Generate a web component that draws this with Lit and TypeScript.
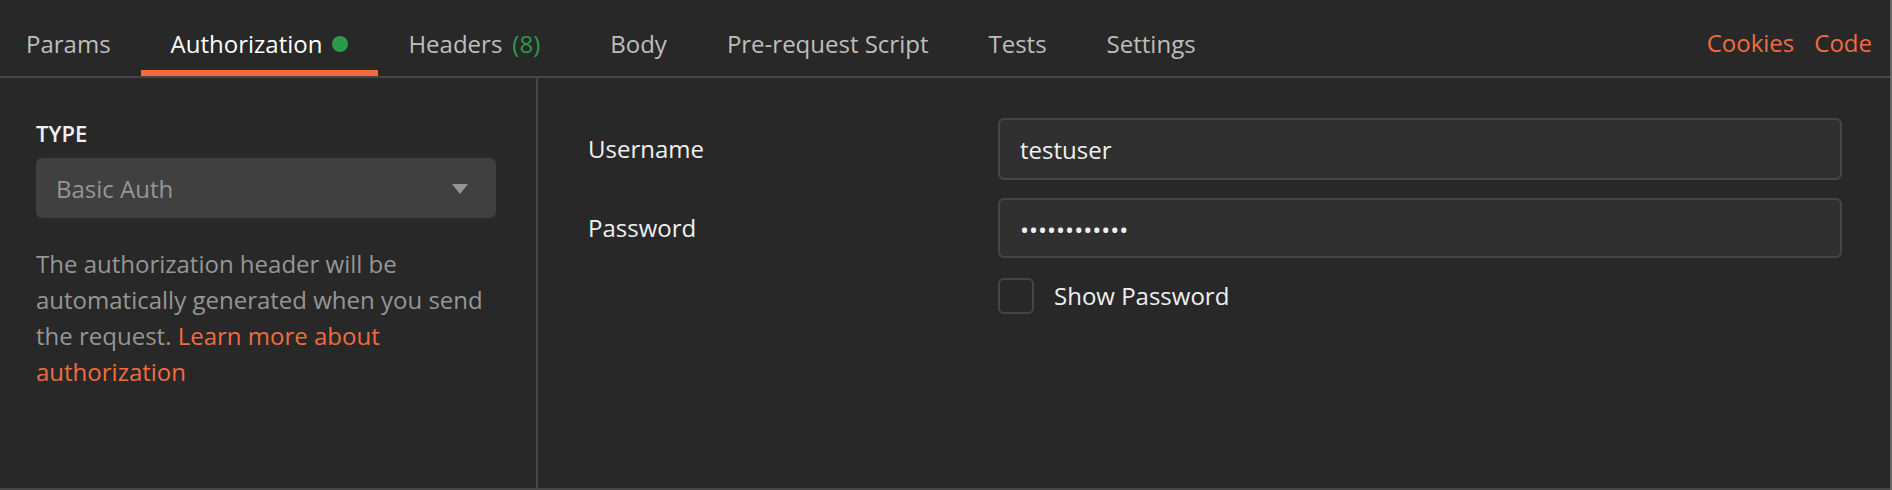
import { LitElement, html, css, nothing } from "lit";
import { customElement, state } from "lit/decorators.js";

interface Tab {
  name: string;
  count?: number;
  marked?: boolean;
}

const TABS: Tab[] = [
  { name: "Params" },
  { name: "Authorization", marked: true },
  { name: "Headers", count: 8 },
  { name: "Body" },
  { name: "Pre-request Script" },
  { name: "Tests" },
  { name: "Settings" },
];

@customElement("request-tabs")
export class RequestTabs extends LitElement {
  @state() private active = "Authorization";

  static styles = css`
    :host {
      display: flex;
      justify-content: space-between;
      border-bottom: 2px solid #464646;
    }
    .tabs {
      display: flex;
    }
    .tab {
      display: flex;
      align-items: center;
      gap: 10px;
      box-sizing: border-box;
      height: 76px;
      margin: 0;
      padding: 18px 30px 0;
      border: 0;
      border-bottom: 6px solid transparent;
      background: none;
      color: #bebebe;
      font: inherit;
      white-space: nowrap;
      cursor: pointer;
    }
    .tab:first-child {
      padding-left: 26px;
    }
    .active {
      color: #ffffff;
      border-bottom-color: #f26b3f;
    }
    .count {
      color: #2b9a4a;
      margin-right: 10px;
    }
    .dot {
      width: 16px;
      height: 16px;
      border-radius: 50%;
      background: #2b9a4a;
    }
    .links {
      display: flex;
      align-items: center;
      gap: 20px;
      padding: 10px 18px 0 0;
    }
    .link {
      color: #f26b3f;
      text-decoration: none;
    }
  `;

  render() {
    return html`
      <div class="tabs" role="tablist">
        ${TABS.map(
          (tab) => html`<button
            class="tab ${tab.name === this.active ? "active" : ""}"
            role="tab"
            aria-selected=${tab.name === this.active ? "true" : "false"}
            @click=${() => (this.active = tab.name)}
          >
            <span>${tab.name}</span>
            ${tab.count ? html`<span class="count">(${tab.count})</span>` : nothing}
            ${tab.marked ? html`<span class="dot"></span>` : nothing}
          </button>`
        )}
      </div>
      <nav class="links">
        <a class="link" href="#cookies">Cookies</a>
        <a class="link" href="#code">Code</a>
      </nav>
    `;
  }
}

@customElement("auth-type")
export class AuthType extends LitElement {
  static styles = css`
    :host {
      display: block;
      box-sizing: border-box;
      padding: 40px 40px 40px 36px;
      border-right: 2px solid #464646;
    }
    .label {
      display: block;
      color: #f0f0f0;
      font-size: 22px;
      line-height: 30px;
      font-weight: 600;
      margin-bottom: 10px;
    }
    .picker {
      display: grid;
      align-items: center;
    }
    .select {
      grid-area: 1 / 1;
      appearance: none;
      box-sizing: border-box;
      width: 100%;
      height: 60px;
      margin: 0;
      padding: 2px 60px 0 20px;
      border: 0;
      border-radius: 6px;
      background: #404040;
      color: #969696;
      font: inherit;
    }
    .caret {
      grid-area: 1 / 1;
      justify-self: end;
      margin: 2px 28px 0 0;
      width: 16px;
      height: 10px;
      fill: #969696;
      pointer-events: none;
    }
    .hint {
      margin: 28px 0 0;
      line-height: 36px;
      color: #969696;
    }
    .link {
      color: #f26b3f;
      text-decoration: none;
    }
  `;

  render() {
    return html`
      <label class="label" for="type">TYPE</label>
      <div class="picker">
        <select class="select" id="type">
          <option>Basic Auth</option>
        </select>
        <svg class="caret" viewBox="0 0 16 10" aria-hidden="true"><path d="M0 0h16L8 10z" /></svg>
      </div>
      <p class="hint">
        The authorization header will be automatically generated when you send the request.
        <a class="link" href="#learn">Learn more about authorization</a>
      </p>
    `;
  }
}

@customElement("basic-auth-form")
export class BasicAuthForm extends LitElement {
  @state() private shown = false;

  static styles = css`
    :host {
      display: block;
      padding: 40px 48px 40px 50px;
      color: #f0f0f0;
    }
    .form {
      display: grid;
      grid-template-columns: 410px 1fr;
      align-items: center;
      row-gap: 18px;
    }
    .input {
      box-sizing: border-box;
      width: 100%;
      height: 62px;
      margin: 0;
      padding: 0 20px;
      border: 2px solid #464646;
      border-radius: 6px;
      outline: none;
      background: #303030;
      color: inherit;
      font: inherit;
    }
    .secret {
      height: 60px;
      padding-top: 2px;
    }
    .toggle {
      grid-column: 2;
      display: flex;
      align-items: center;
      gap: 20px;
      width: max-content;
      margin-top: 2px;
    }
    .box {
      appearance: none;
      box-sizing: border-box;
      width: 36px;
      height: 36px;
      margin: 0;
      border: 2px solid #464646;
      border-radius: 6px;
    }
    .box:checked {
      background: #f26b3f;
    }
  `;

  render() {
    return html`
      <form class="form">
        <label for="username">Username</label>
        <input class="input" id="username" type="text" value="testuser" autocomplete="off" />
        <label for="password">Password</label>
        <input
          class="input secret"
          id="password"
          type=${this.shown ? "text" : "password"}
          value="testpassword"
          autocomplete="off"
        />
        <label class="toggle">
          <input
            class="box"
            type="checkbox"
            .checked=${this.shown}
            @change=${() => (this.shown = !this.shown)}
          />
          Show Password
        </label>
      </form>
    `;
  }
}

@customElement("app-root")
export class AppRoot extends LitElement {
  static styles = css`
    :host {
      display: flex;
      flex-direction: column;
      box-sizing: border-box;
      min-height: 100vh;
      border-right: 2px solid #666666;
      background: #282828;
      font: 24px/34px "Open Sans", "Noto Sans", sans-serif;
    }
    .panel {
      flex: 1;
      display: grid;
      grid-template-columns: 538px 1fr;
      border-bottom: 2px solid #464646;
    }
  `;

  render() {
    return html`
      <request-tabs></request-tabs>
      <main class="panel">
        <auth-type></auth-type>
        <basic-auth-form></basic-auth-form>
      </main>
    `;
  }
}
